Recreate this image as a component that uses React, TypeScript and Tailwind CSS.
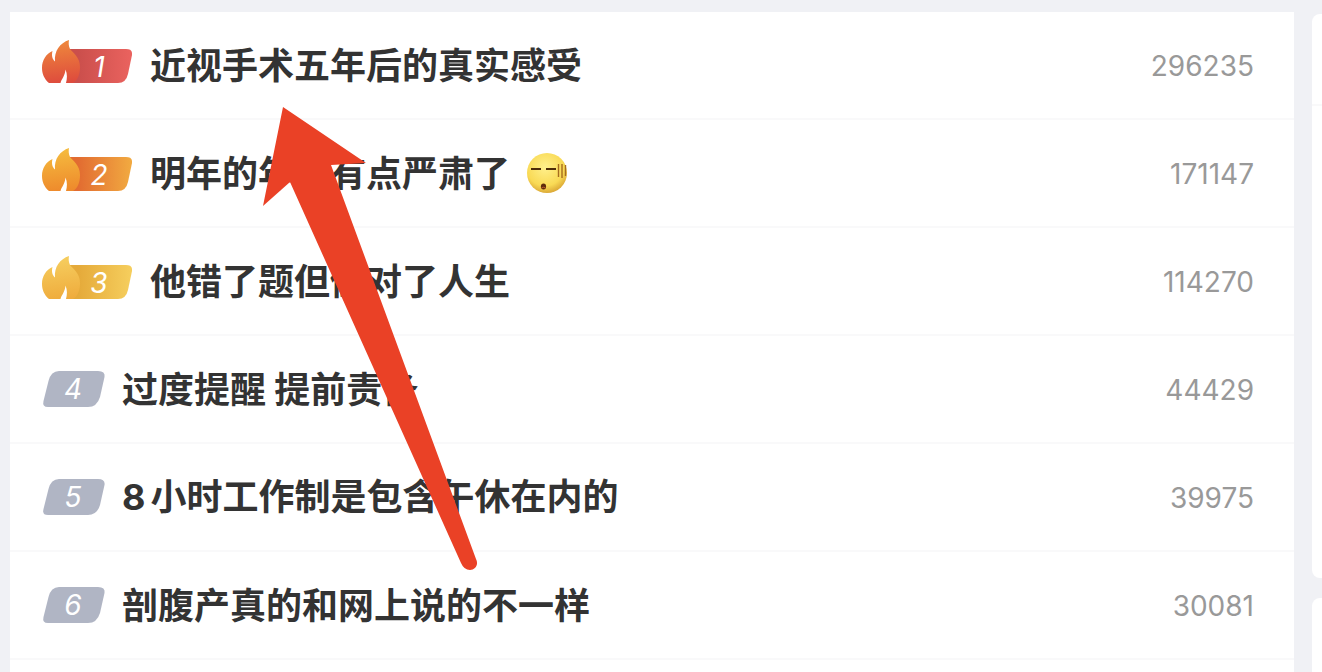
import React from "react";

type Topic = { rank: number; title: string; lead?: string; heat: number; emoji?: boolean };

const topics: Topic[] = [
  { rank: 1, title: "近视手术五年后的真实感受", heat: 296235 },
  { rank: 2, title: "明年的年假有点严肃了", heat: 171147, emoji: true },
  { rank: 3, title: "他错了题但做对了人生", heat: 114270 },
  { rank: 4, title: "过度提醒 提前责备", heat: 44429 },
  { rank: 5, lead: "8", title: "小时工作制是包含午休在内的", heat: 39975 },
  { rank: 6, title: "剖腹产真的和网上说的不一样", heat: 30081 },
];

const flames = [
  { top: "#ef8a3c", bottom: "#de4b3d", from: "#cb4f4c", to: "#e9625e" },
  { top: "#f5bd3f", bottom: "#ee8a2c", from: "#e26c31", to: "#f1a840" },
  { top: "#f6cf60", bottom: "#efac3d", from: "#e5aa3a", to: "#f5cd5c" },
];

function FlameBadge({ rank }: { rank: number }) {
  const c = flames[rank - 1];
  return (
    <span className="relative block h-[50px] w-[90px]">
      <svg viewBox="0 0 90 44" className="block h-11 w-[90px]" aria-hidden="true">
        <defs>
          <linearGradient id={`flame${rank}`} x1="0.4" y1="0" x2="0.5" y2="1">
            <stop offset="0" stopColor={c.top} />
            <stop offset="1" stopColor={c.bottom} />
          </linearGradient>
          <linearGradient id={`plate${rank}`} gradientUnits="userSpaceOnUse" x1="36" y1="0" x2="88" y2="0">
            <stop offset="0" stopColor={c.from} />
            <stop offset="1" stopColor={c.to} />
          </linearGradient>
        </defs>
        <path d="M28 9H84Q91 9 90 15L86 34Q84 43 76 43H28Z" fill={`url(#plate${rank})`} />
        <path
          d="M7 43C2 39 0 33 0 28C0 20 4 14 10.500 11C9.500 15 10 19 13 21.500C12 11 18 3 27 0C26.500 3 26.500 6 28 9C31 13 38 17 38 27C38 34 36 40 31 43Z"
          fill={`url(#flame${rank})`}
        />
        <path d="M18.500 43C19.500 39 23 36 23.500 29.500C25.500 34 25.200 39 24 43Z" fill="#fff" />
      </svg>
      <span className="absolute inset-x-0 top-[9px] pl-6 text-center font-['Inter',sans-serif] text-[28px] leading-9 text-white italic">
        {rank}
      </span>
    </span>
  );
}

function PlainBadge({ rank }: { rank: number }) {
  return (
    <span className="relative block h-9 w-[62px]">
      <svg viewBox="0 0 62 36" className="block h-9 w-[62px] overflow-visible" aria-hidden="true">
        <path d="M17 0H56Q63.500 0 62.500 6L58 26Q55 36 46 36H6Q0 36 1.500 30L6.500 10Q9 0 17 0Z" fill="#b0b5c4" />
      </svg>
      <span className="absolute inset-0 text-center font-['Inter',sans-serif] text-[28px] leading-9 text-white italic">
        {rank}
      </span>
    </span>
  );
}

function SpeechlessFace() {
  return (
    <svg viewBox="0 0 42 42" className="ml-4 size-[42px]" role="img" aria-label="无语">
      <defs>
        <radialGradient id="face" cx="0.45" cy="0.36" r="0.66">
          <stop offset="0" stopColor="#fff08c" />
          <stop offset="0.7" stopColor="#f9da55" />
          <stop offset="1" stopColor="#d9a534" />
        </radialGradient>
      </defs>
      <circle cx="21" cy="21" r="20" fill="url(#face)" />
      <path d="M5 17H15M20 17H30" fill="none" stroke="#4d2c08" strokeWidth="2" />
      <path d="M32.500 12V25M36 12V26M39.500 13V24" stroke="#a56c1e" strokeWidth="1.400" />
      <ellipse cx="17.500" cy="34.500" rx="2.600" ry="3" fill="#5f2b0b" />
      <path d="M15.500 36Q17.500 34.500 19.500 36" fill="none" stroke="#c2602d" strokeWidth="1" />
    </svg>
  );
}

function PointerArrow() {
  return (
    <svg
      viewBox="0 0 220 466"
      className="pointer-events-none absolute top-[106px] left-[260px] h-[466px] w-[220px]"
      aria-hidden="true"
    >
      <path d="M23 1L106 57L71 59L216 453C219 459 215 464 210 464Q204 464 201 457L30 76L3 100Z" fill="#ea4126" />
    </svg>
  );
}

export default function App() {
  return (
    <div className="relative flex h-screen gap-[18px] overflow-hidden bg-[#f0f1f5] pt-3 pl-[10px] font-['Noto_Sans_CJK_SC',sans-serif]">
      <main className="min-w-0 flex-1">
        <ol className="min-h-full bg-white">
          {topics.map((t) => (
            <li key={t.rank} className="border-b-2 border-[#f9f9fa]">
              <a href={`#topic-${t.rank}`} className="flex h-[106px] items-center pr-10 pl-8">
                {t.rank <= 3 ? <FlameBadge rank={t.rank} /> : <PlainBadge rank={t.rank} />}
                <span className="ml-[18px] pb-1 text-4xl font-bold whitespace-nowrap text-[#333]">
                  {t.lead && <span className="mr-[5px] font-['Inter',sans-serif]">{t.lead}</span>}
                  {t.title}
                </span>
                {t.emoji && <SpeechlessFace />}
                <span className="ml-auto pt-0.5 font-['Inter',sans-serif] text-[28px] text-[#999]">{t.heat}</span>
              </a>
            </li>
          ))}
          <li className="h-4" />
        </ol>
      </main>
      <aside className="flex w-[10px] shrink-0 flex-col gap-5 pt-[2px]">
        <section className="h-[564px] shrink-0 rounded-l-lg bg-white">
          <div className="h-[92px] border-b-2 border-[#f9f9fa]" />
        </section>
        <section className="h-40 shrink-0 rounded-l-lg bg-white" />
      </aside>
      <PointerArrow />
    </div>
  );
}
